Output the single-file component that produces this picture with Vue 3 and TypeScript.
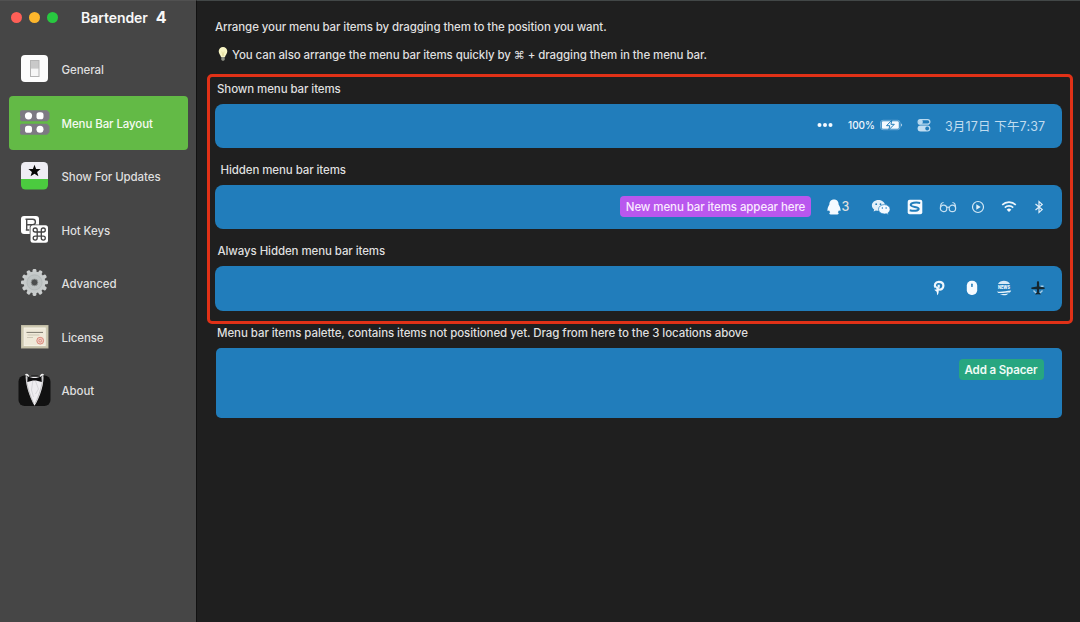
<script setup lang="ts">
interface NavItem {
  id: string
  label: string
}

const navItems: NavItem[] = [
  { id: 'general', label: 'General' },
  { id: 'layout', label: 'Menu Bar Layout' },
  { id: 'updates', label: 'Show For Updates' },
  { id: 'hotkeys', label: 'Hot Keys' },
  { id: 'advanced', label: 'Advanced' },
  { id: 'license', label: 'License' },
  { id: 'about', label: 'About' },
]
const activeId = 'layout'

const teeth: number[] = Array.from({ length: 12 }, (_, i) => i * 30)
</script>

<template>
  <div class="window">
    <aside class="sidebar">
      <header class="titlebar">
        <span class="light red"></span>
        <span class="light yellow"></span>
        <span class="light green"></span>
        <h1 class="title">Bartender <b>4</b></h1>
      </header>
      <nav class="nav">
        <a v-for="item in navItems" :key="item.id" class="nav-item" :class="{ active: item.id === activeId }">
          <svg class="nav-icon" viewBox="0 0 34 34">
            <g v-if="item.id === 'general'">
              <rect x="4" y="3" width="27" height="27" rx="4" fill="#fdfdfd" />
              <rect x="13" y="8" width="9.5" height="17" fill="#b4b4b4" />
              <rect x="14" y="9" width="7.5" height="7.5" fill="#c9c9c9" />
              <rect x="14" y="16.5" width="7.5" height="7.5" fill="#f6f6f6" />
            </g>
            <g v-else-if="item.id === 'layout'">
              <path d="M4 4.200h26l2.500 2.500v6l-2.500 2.500H4l-1-1.500V12l.7-1-.7-1V5.700z" fill="#7d7983" />
              <path d="M4 17.800h26l2.500 2.500v6l-2.500 2.500H4l-1-1.500v-1.700l.7-1-.7-1v-4.300z" fill="#7d7983" />
              <circle cx="11.500" cy="9.800" r="3.600" fill="#fff" />
              <rect x="19.500" y="6.300" width="7" height="7" rx="2.600" fill="#fff" />
              <rect x="8" y="19.800" width="7" height="7" rx="2.600" fill="#fff" />
              <circle cx="23" cy="23.300" r="3.500" fill="#fff" />
            </g>
            <g v-else-if="item.id === 'updates'">
              <path d="M4 20V7.500a4.500 4.500 0 0 1 4.500-4.500h18a4.500 4.500 0 0 1 4.500 4.500V20z" fill="#eeedf3" />
              <path d="M4 20h27v6a4.500 4.500 0 0 1-4.500 4.500h-18A4.500 4.500 0 0 1 4 26z" fill="#4bcb3f" />
              <path d="M17.500 5.800l1.600 4.100 4.500.200-3.500 2.800 1.300 4.400-3.900-2.500-3.900 2.500 1.300-4.400-3.500-2.800 4.500-.200z" fill="#050505" />
            </g>
            <g v-else-if="item.id === 'hotkeys'">
              <rect x="4" y="3" width="18" height="18" rx="3" fill="#fff" />
              <path d="M8.800 17h3.500M9.700 17V6.300h6a2.700 2.700 0 0 1 0 5.400H9.700M8.500 6.300h2" fill="none" stroke="#4a4a4a" stroke-width="1.400" />
              <rect x="12.700" y="11.500" width="19" height="19" rx="3" fill="#464646" />
              <rect x="13.500" y="12.300" width="17.500" height="17.500" rx="2.500" fill="#fff" />
              <path d="M20.200 19h4.100v4.100h-4.100zM20.200 19h-2a2 2 0 1 1 2-2zM24.300 19v-2a2 2 0 1 1 2 2zM24.300 23.100h2a2 2 0 1 1-2 2zM20.200 23.100v2a2 2 0 1 1-2-2z" fill="none" stroke="#444" stroke-width="1.300" />
            </g>
            <g v-else-if="item.id === 'advanced'">
              <rect v-for="a in teeth" :key="a" x="15.600" y="2.900" width="3.800" height="6" rx="1.300" fill="#cacdcd" :transform="`rotate(${a} 17.500 16.400)`" />
              <circle cx="17.500" cy="16.400" r="10.800" fill="#c6caca" />
              <circle cx="17.500" cy="16.400" r="7.600" fill="#bec3c3" stroke="#aeb3b3" stroke-width=".7" />
              <circle cx="17.500" cy="16.400" r="3.400" fill="#4c4e4e" stroke="#999e9e" stroke-width=".8" />
            </g>
            <g v-else-if="item.id === 'license'">
              <rect x="4" y="5" width="27.500" height="23.500" fill="#b9b49e" />
              <rect x="4.600" y="5.600" width="26.300" height="22" fill="#cdc8b0" />
              <rect x="7.200" y="8" width="21" height="17.500" fill="#efe9d8" stroke="#f5f1e5" />
              <path d="M9.500 12.400h16.500" stroke="#79766b" stroke-width="1" />
              <path d="M10.500 15h12M10 17.500h6" stroke="#bfb9a7" stroke-width=".7" />
              <circle cx="23.200" cy="20.700" r="3.400" fill="#efcfc3" stroke="#d88073" stroke-width=".9" />
              <circle cx="23.200" cy="20.700" r="1.400" fill="none" stroke="#d88073" stroke-width=".8" />
            </g>
            <g v-else>
              <rect x="1.500" y="2.500" width="32" height="30.500" rx="6" fill="#111" />
              <path d="M9 1.500c-1.500 7 3.500 23 8.500 31.200C23 25 28 8.500 26 1.500l-8 2.500z" fill="#eeedf0" />
              <path d="M9.300 1.300c-.8 6 3 20 7.400 29M25.800 1.300c.8 6-3 20-7.600 29" fill="none" stroke="#999" stroke-width=".5" />
              <path d="M15.800 8l-1.300 9 2 7M18.500 8l3 8-3 5" fill="none" stroke="#d0d0d4" stroke-width=".8" />
              <path d="M8.500 1c3.500-.5 2.500 1.800 9 2 6.500-.2 5.500-2.500 9-2l-1.600 3H10z" fill="#464646" />
              <path d="M8.500 2c2-1.500 2.500 1 3.500 1.500M26.500 2c-2-1.500-2.500 1-3.500 1.500" fill="none" stroke="#eee" stroke-width="1.600" />
              <path d="M10.500 3.500l5.500 1.600h3l5.500-1.600.300 5.500-5.800-1.400h-3L10.300 9z" fill="#0c0c0d" />
            </g>
          </svg>
          <span class="nav-label">{{ item.label }}</span>
        </a>
      </nav>
    </aside>

    <main class="content">
      <p class="intro t-intro">Arrange your menu bar items by dragging them to the position you want.</p>
      <p class="intro tip">
        <svg class="bulb" viewBox="0 0 12 16">
          <path d="M6 1a4.300 4.300 0 0 0-4.300 4.300C1.700 7.600 3.400 8.800 4 11h4c.6-2.200 2.300-3.400 2.300-5.700A4.300 4.300 0 0 0 6 1z" fill="#f8f5c4" />
          <path d="M4.800 5.500L6 10l1.200-4.500" fill="none" stroke="#d8d08a" stroke-width=".6" />
          <path d="M4.300 11h3.400v3L6 15l-1.700-1z" fill="#8d9085" />
        </svg>
        <span class="t-tip">You can also arrange the menu bar items quickly by <span class="cmd">⌘</span> + dragging them in the menu bar.</span>
      </p>

      <section class="frame">
        <h2 class="label t-shown">Shown menu bar items</h2>
        <div class="bar first">
          <svg class="dots" viewBox="0 0 16 6"><circle cx="2.500" cy="3" r="2" /><circle cx="8" cy="3" r="2" /><circle cx="13.500" cy="3" r="2" /></svg>
          <span class="percent">100%</span>
          <svg class="battery" viewBox="0 0 23 12">
            <rect x=".5" y="1.300" width="19.500" height="9.400" rx="2.500" fill="none" stroke="#7fb6de" stroke-width=".8" />
            <rect x="1.800" y="2.300" width="17" height="7.400" rx="1.200" />
            <path d="M21 4.500c1.500.4 1.500 2.700 0 3.100z" fill="#a9cde8" />
            <path d="M11.900 1.200L6.500 6.700h3.300l-1 4.100 5.500-5.500h-3.400z" stroke="#217dbb" stroke-width="1" />
          </svg>
          <svg class="control" viewBox="0 0 14 14">
            <rect x="1.100" y="1.600" width="11.800" height="4.600" rx="2.300" fill="none" stroke="#b9daf0" stroke-width="1.200" />
            <circle cx="3.600" cy="3.900" r="2.300" fill="#b9daf0" />
            <rect x=".6" y="7.600" width="12.800" height="5.800" rx="2.900" fill="#c1def2" />
            <circle cx="10.200" cy="10.500" r="1.900" fill="#217dbb" />
          </svg>
          <span class="date">3月17日 下午7:37</span>
        </div>

        <h2 class="label t-hidden">Hidden menu bar items</h2>
        <div class="bar">
          <span class="badge"><span>New menu bar items appear here</span></span>
          <svg class="qq" viewBox="0 0 14 16"><path d="M7 .5C3.800.5 2.300 2.700 2.400 5.500 1.200 7.500.3 9.500.5 11.500c.1.800.7.700 1.500-.2.200.8.700 1.500 1.200 2-1.600.7-1 2.200.7 2.200h6.200c1.700 0 2.300-1.500.7-2.200.5-.5 1-1.200 1.200-2 .8.900 1.400 1 1.500.2.200-2-.7-4-1.900-6C11.700 2.700 10.200.5 7 .5z" /></svg>
          <span class="count">3</span>
          <svg class="wechat" viewBox="0 0 20 16">
            <path d="M7.500 1C3.800 1 .9 3.400.9 6.500c0 1.700.9 3.100 2.300 4.100l-.6 2 2.300-1.200c.8.300 1.700.4 2.600.4 3.700 0 6.600-2.400 6.600-5.300S11.200 1 7.500 1z" fill="#e4f0f9" />
            <circle cx="5.200" cy="5.200" r=".9" fill="#217dbb" /><circle cx="9.500" cy="5.200" r=".9" fill="#217dbb" />
            <path d="M13.300 5.600c-3.300 0-5.800 2.100-5.800 4.700s2.500 4.700 5.800 4.700c.7 0 1.400-.1 2-.3l2.200 1-.6-1.800c1.300-.8 2.200-2.100 2.200-3.600 0-2.600-2.600-4.700-5.800-4.700z" stroke="#217dbb" stroke-width=".7" />
            <circle cx="11.400" cy="9" r=".75" fill="#217dbb" /><circle cx="15.100" cy="9" r=".75" fill="#217dbb" />
          </svg>
          <svg class="sogou" viewBox="0 0 16 16">
            <rect x=".7" y=".7" width="14.600" height="14.600" rx="2" />
            <path d="M13.200 3.900C8.500 3.200 3.900 3.700 3.700 5.900c-.2 2.500 8.300 1.500 8 3.900-.2 2.100-4.800 2.400-9 1.400" fill="none" stroke="#217dbb" stroke-width="2" />
          </svg>
          <svg class="glasses" viewBox="0 0 18 14">
            <g fill="none" stroke="#c9e1f2" stroke-width="1.200"><circle cx="4.600" cy="8.400" r="3.200" /><circle cx="13.400" cy="8.400" r="3.200" /><path d="M7.700 7.700c.6-.9 2-.9 2.600 0M1.400 8.200c0-3 .8-5.700 3.200-5.700M16.600 8.200c0-3-.8-5.700-3.200-5.700" /></g>
          </svg>
          <svg class="play" viewBox="0 0 14 14"><circle cx="7" cy="7" r="5.500" fill="none" stroke="#d5e8f5" stroke-width="1.200" /><path d="M5.300 4.300v5.400L9.700 7z" fill="#e2f0f9" /></svg>
          <svg class="wifi" viewBox="0 0 16 13">
            <g fill="none" stroke="#edf6fc" stroke-width="1.600"><path d="M1.200 4.900a9.800 9.800 0 0 1 13.600 0" /><path d="M3.800 7.600a6.100 6.100 0 0 1 8.400 0" /></g>
            <path d="M8 12L5.700 9.700a3.300 3.300 0 0 1 4.600 0z" />
          </svg>
          <svg class="bt" viewBox="0 0 10 14"><path d="M1.500 4l6.700 5.600L5 12.500v-11l3.200 2.900L1.500 10" fill="none" stroke="#e3f0fa" stroke-width="1.200" /></svg>
        </div>

        <h2 class="label t-always">Always Hidden menu bar items</h2>
        <div class="bar">
          <svg class="pin" viewBox="0 0 12 16">
            <path d="M2.700 7.700C.9 5 2.300 1.900 5.700 1.900c3.200 0 4.700 1.800 4.700 3.900 0 2.900-2.600 4.500-4.900 3.500-1.200-.5-1.700-1.500-1.200-2.500M5.700 4.700v3" fill="none" stroke="#eff7fd" stroke-width="2.200" />
            <path d="M1.200 9.800l4.700-.8-.3 3.500c-.2 1.200-.6 2-1.400 2.800l-.5-3.500z" />
          </svg>
          <svg class="mouse" viewBox="0 0 12 16"><rect x=".8" y=".8" width="10.400" height="14.200" rx="4.800" /><rect x="5.200" y="3.500" width="1.500" height="3.600" rx=".7" fill="#217dbb" /></svg>
          <svg class="news" viewBox="0 0 16 16">
            <path d="M2 4C4.200-.2 11.600-.2 14 4z" fill="#d7e9f6" />
            <text x="2" y="9.200" textLength="12" lengthAdjust="spacingAndGlyphs">NEWS</text>
            <path d="M.8 11.400c5 1 9-.8 14.400-1-.4 1-.8 1.500-1.400 2.100-3.500 0-7 .8-11.400.5zM4 14.100c3.200.2 5.500-.3 8.600-.6-2.300 2.200-6 2.500-8.600.6z" fill="#e5f2fa" />
          </svg>
          <svg class="plane" viewBox="0 0 14 16">
            <path d="M2.500 10.500l3 3M11.500 10.500l-3 3M9.500 6.300h3" stroke="#a6cfe9" stroke-width="1.400" fill="none" />
            <path d="M7 1c.8 0 1.100 1 1.100 2v3.600l5.500 1v1.500l-5.500.2-.2 3 1.800 1.500v.8L7 14.200l-2.700.4v-.8l1.800-1.500-.2-3-5.500-.2V7.600l5.500-1V3c0-1 .3-2 1.100-2z" fill="#15262f" />
          </svg>
        </div>
      </section>

      <h2 class="label palette-label">Menu bar items palette, contains items not positioned yet. Drag from here to the 3 locations above</h2>
      <div class="palette"><button class="spacer" type="button">Add a Spacer</button></div>
    </main>
  </div>
</template>

<style scoped>
.window {
  display: flex;
  width: 1080px;
  height: 622px;
  overflow: hidden;
  background: #1f1f1f;
  color: #dfdfdf;
  font-family: Inter, "Noto Sans CJK SC", sans-serif;
  font-size: 11.500px;
  font-weight: 500;
  letter-spacing: -.095px;
  white-space: nowrap;
}
h1, h2, p { margin: 0; font: inherit; }
svg { display: block; flex: none; fill: #f5faff; }

.sidebar {
  box-sizing: border-box;
  flex: none;
  width: 197px;
  background: #464646;
  border-right: 1px solid #111;
  border-top: 1px solid #515151;
}
.titlebar { display: flex; align-items: center; height: 32px; padding-left: 11px; margin-bottom: 9.500px; }
.light { width: 11px; height: 11px; margin-right: 7px; border-radius: 50%; }
.red { background: #fe5f57; }
.yellow { background: #fdb62c; }
.green { background: #28c840; }
.title { margin-left: 16px; font-size: 14px; font-weight: 600; color: #f8f8f8; letter-spacing: -.05px; }
.title b { margin-left: 4.500px; font-size: 16px; font-weight: 700; }

.nav { padding: 0 8.500px 0 9px; }
.nav-item { display: flex; align-items: center; height: 53.500px; border-radius: 4px; }
.nav-item.active { background: #63ba46; color: #f5fbf2; }
.nav-icon { width: 34px; height: 34px; margin-left: 8px; }
.nav-label { margin-left: 10.500px; padding-top: 2px; }

.content { box-sizing: border-box; flex: 1; border-top: 1px solid #424747; }
.intro { display: flex; align-items: center; height: 28px; padding-left: 18px; }
.t-intro { box-sizing: border-box; height: 39px; padding-top: 13px; }
.tip { padding-left: 20px; }
.t-tip { padding-top: 2px; }
.bulb { width: 12px; height: 16px; margin-right: 3px; }
.cmd { font-family: "DejaVu Sans", sans-serif; font-size: 11px; }

.frame {
  box-sizing: border-box;
  width: 866px;
  height: 250px;
  margin: 6px 0 0 10px;
  padding: 0 8px 0 5px;
  border: 3px solid #e03117;
  border-radius: 5px;
}
.label { box-sizing: border-box; display: flex; align-items: center; height: 16px; padding-top: 1.500px; }
.t-shown { margin: 3.500px 0 7px 2px; }
.t-hidden { margin: 13px 0 7.500px 5.500px; }
.t-always { margin: 13.500px 0 7.500px 2.500px; }
.bar {
  box-sizing: border-box;
  display: flex;
  align-items: center;
  justify-content: flex-end;
  width: 847px;
  height: 44.500px;
  border-radius: 8px;
  background: #217dbb;
}
.bar.first { padding-bottom: 1.500px; }
.dots { width: 16px; height: 6px; margin-right: 15px; }
.percent { width: 31.500px; font-size: 10px; letter-spacing: -.02px; color: #eff7fd; }
.battery { width: 23px; height: 12px; margin-right: 14px; }
.control { width: 14px; height: 14px; margin-right: 14.500px; }
.date { width: 117px; font-size: 12.500px; font-weight: 400; letter-spacing: .15px; color: #c0dcef; }

.badge {
  display: flex;
  align-items: center;
  justify-content: center;
  width: 191px;
  height: 21px;
  margin-right: 16px;
  border-radius: 4px;
  background: #b957ee;
  color: #fbeaff;
}
.qq { width: 14px; height: 16px; }
.count { width: 29px; padding-left: .500px; font-size: 12.500px; }
.wechat { width: 20px; height: 16px; margin-right: 16px; }
.sogou { width: 16px; height: 16px; margin-right: 16px; }
.glasses { width: 18px; height: 14px; margin-right: 14px; }
.play { width: 14px; height: 14px; margin-right: 16px; }
.wifi { width: 16px; height: 13px; margin-right: 17px; }
.bt { width: 10px; height: 14px; margin-right: 18.500px; }

.pin { width: 12px; height: 16px; margin-right: 21px; }
.mouse { width: 12px; height: 16px; margin-right: 18px; }
.news { width: 16px; height: 16px; margin-right: 19px; overflow: visible; }
.news text { font-size: 5px; font-weight: 800; letter-spacing: 0; }
.plane { width: 14px; height: 16px; margin-right: 17.500px; }

.palette-label { margin: 0 0 8px 20px; letter-spacing: -.07px; }
.palette {
  box-sizing: border-box;
  display: flex;
  align-items: flex-start;
  justify-content: flex-end;
  width: 846px;
  height: 70px;
  margin-left: 18.500px;
  padding: 11px 18px 0 0;
  border-radius: 5px;
  background: #217dbb;
}
.spacer {
  width: 85px;
  height: 21px;
  padding: 0;
  border: 0;
  border-radius: 4px;
  background: #27a680;
  color: #effbf6;
  font: inherit;
  font-weight: 600;
  letter-spacing: -.12px;
}
</style>

<style>
html, body { background: #1f1f1f; }
</style>
